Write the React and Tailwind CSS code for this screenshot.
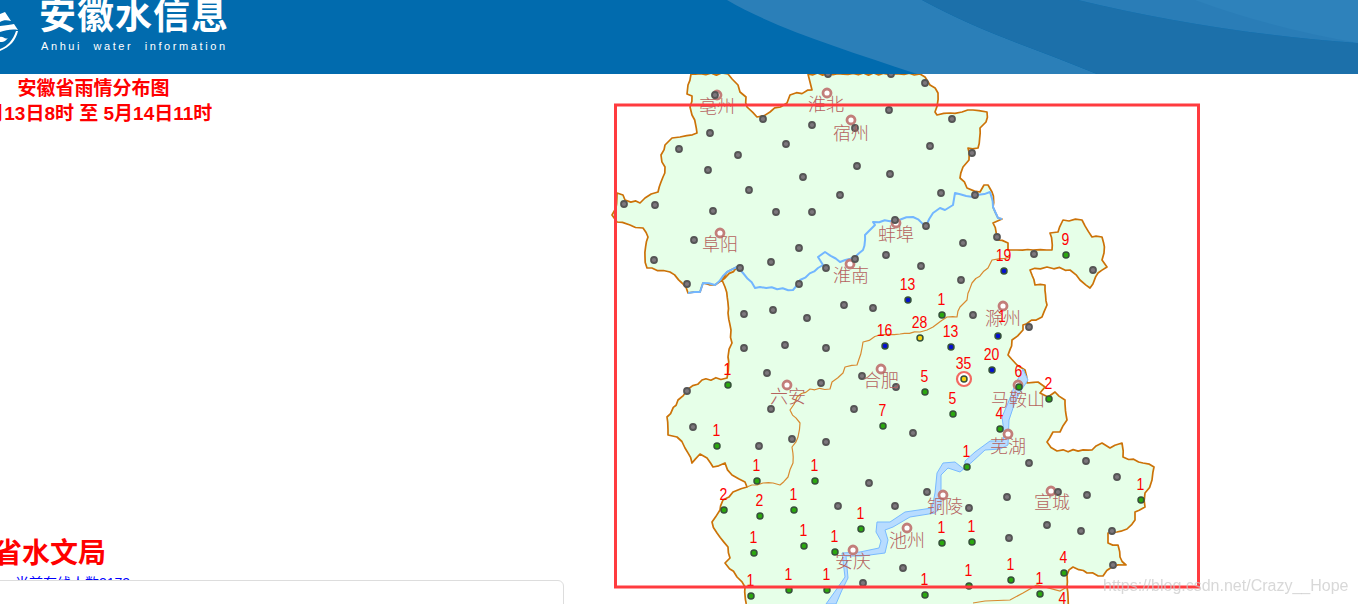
import React from "react";

const cjk = "font-['Liberation_Sans','Noto_Sans_CJK_SC',sans-serif]";

const outline =
  "808,74 920,74 925,77 930,85 938,93 935,112 937,115 950,113 962,112 973,110 987,112 986,122 980,128 978,148 968,148 969,160 963,167 960,178 967,188 980,192 984,185 988,185 992,192 993,207 998,218 1002,219 993,223 997,240 1008,243 1008,250 1017,250 1033,250 1052,250 1050,233 1058,232 1063,220 1082,220 1092,237 1102,237 1104,253 1102,260 1107,267 1098,273 1090,288 1080,280 1070,270 1047,267 1030,270 1035,285 1045,285 1047,305 1042,317 1023,325 1023,330 1012,340 1008,355 1017,365 1025,370 1027,383 1038,382 1045,387 1040,393 1048,397 1055,392 1065,400 1067,420 1060,432 1053,432 1047,442 1057,451 1092,450 1102,443 1110,448 1122,443 1123,457 1143,463 1154,467 1152,480 1145,493 1145,507 1135,512 1135,520 1127,529 1117,532 1108,533 1108,543 1118,545 1120,557 1126,565 1112,567 1103,576 1087,573 1073,567 1067,575 1067,587 1068,610 748,610 745,587 737,577 725,563 730,558 728,547 717,533 712,522 720,510 723,500 733,492 747,487 745,482 732,475 725,463 713,467 707,458 700,454 692,463 685,448 677,437 668,435 667,417 678,400 687,390 702,380 727,378 728,357 732,343 731,330 728,313 725,287 722,280 727,272 737,267 715,285 703,283 700,292 688,293 682,283 670,272 647,268 645,257 648,237 643,228 630,225 617,222 612,215 616,208 617,193 623,195 625,200 640,203 645,198 658,192 663,177 665,167 661,155 665,145 672,138 680,137 697,133 692,115 690,107 692,96 687,94 688,85 691,74 728,74 738,85 740,92 746,97 747,107 757,117 770,112 787,103 790,95 812,90";

const innerLine =
  "1010,257 992,260 988,268 972,283 967,300 960,307 957,317 947,317 933,327 920,332 900,334 880,335 863,342 857,365 845,367 843,373 832,382 830,389 810,389 797,397 790,410 800,423 798,437 792,447 793,463 788,477 780,485 773,483 763,483 747,487";

const huaiRiver =
  "688,293 700,292 703,283 715,285 727,272 737,267 743,273 755,288 760,287 793,290 800,280 818,268 823,265 818,257 825,252 840,262 855,257 863,250 865,235 875,225 873,222 895,220 913,217 926,226 933,213 940,208 945,210 953,205 955,193 973,197 990,192 993,207 998,218 1002,219";

const yangtze =
  "1023,369 1015,385 1008,403 1002,417 1004,432 1003,441 990,441 975,452 965,461 965,470 955,462 943,463 937,473 935,493 932,508 905,512 890,522 877,522 876,532 881,541 879,548 860,552 842,553 845,577 836,590 826,604 836,604 842,590 848,578 846,556 862,556 885,553 888,540 885,530 893,527 910,517 935,513 941,505 941,475 948,468 960,472 972,462 985,450 1000,449 1008,445 1009,420 1014,405 1020,392 1028,380";

// break long straight runs up so the borders look hand digitised like the source map
function roughen(points, amount) {
  const pts = points.split(" ").map((p) => p.split(",").map(Number));
  const out = [];
  pts.forEach(([x, y], i) => {
    out.push([x, y]);
    const next = pts[i + 1];
    if (!next) return;
    const len = Math.hypot(next[0] - x, next[1] - y);
    const steps = Math.floor(len / 5);
    for (let s = 1; s < steps; s++) {
      const t = s / steps;
      const w = Math.sin(x * 12.9 + y * 78.2 + s * 37.7) * amount;
      const h = Math.cos(x * 39.3 + y * 11.1 + s * 53.1) * amount;
      out.push([x + (next[0] - x) * t + w, y + (next[1] - y) * t + h]);
    }
  });
  return out.map(([x, y]) => `${x.toFixed(1)},${y.toFixed(1)}`).join(" ");
}

const grayDots = [
  [715, 95], [763, 119], [812, 125], [855, 128], [889, 110], [925, 83], [828, 74], [891, 74], [952, 119],
  [710, 133], [679, 149], [738, 155], [786, 144], [930, 146], [972, 153], [708, 170], [803, 177], [857, 166],
  [890, 174], [749, 190], [840, 195], [941, 193], [975, 195], [624, 204], [655, 205], [713, 211], [776, 212],
  [812, 212], [895, 220], [926, 226], [694, 240], [963, 243], [997, 237], [799, 248], [654, 260], [771, 262],
  [886, 255], [855, 259], [921, 266], [740, 268], [826, 268], [961, 280], [687, 284], [799, 284], [744, 314],
  [773, 310], [807, 318], [844, 305], [873, 308], [973, 315], [1034, 254], [1093, 270], [1029, 327], [744, 348],
  [785, 345], [826, 348], [767, 373], [821, 383], [862, 376], [896, 387], [687, 391], [771, 409], [854, 409],
  [693, 427], [792, 439], [759, 446], [913, 433], [826, 442], [869, 483], [927, 492], [838, 506], [895, 506],
  [903, 568], [863, 583], [1029, 463], [1086, 461], [1117, 477], [1058, 492], [1087, 495], [1007, 497], [969, 508],
  [1047, 525], [1081, 531], [1112, 531], [1009, 538], [1113, 565],
];

// x, y, rainfall, colour class, label x / y when it isn't right above the dot
const rainDots = [
  [1066, 255, "9", "g"], [942, 315, "1", "g"], [1019, 387, "6", "g"], [1049, 399, "2", "g"], [925, 392, "5", "g"],
  [953, 414, "5", "g"], [883, 426, "7", "g"], [1000, 429, "4", "g"], [967, 467, "1", "g"], [728, 385, "1", "g"],
  [717, 446, "1", "g"], [757, 481, "1", "g"], [815, 481, "1", "g"], [724, 510, "2", "g"], [760, 516, "2", "g"],
  [794, 510, "1", "g"], [861, 529, "1", "g"], [754, 553, "1", "g"], [804, 546, "1", "g"], [835, 552, "1", "g"],
  [942, 543, "1", "g"], [972, 542, "1", "g"], [1141, 500, "1", "g"], [1064, 573, "4", "g"], [1011, 580, "1", "g"],
  [969, 586, "1", "g"], [751, 596, "1", "g"], [789, 590, "1", "g"], [827, 590, "1", "g"], [925, 595, "1", "g"],
  [1040, 594, "1", "g"], [1063, 614, "4", "g"],
  [1004, 271, "19", "b"], [908, 300, "13", "b"], [885, 346, "16", "b"], [951, 347, "13", "b"],
  [998, 336, "1", "b", 1002, 322], [992, 370, "20", "b"],
  [920, 338, "28", "y"], [964, 379, "35", "y"],
];

const dotFill = { g: "#2aa80e", b: "#0510d0", y: "#f5d210" };

const cities = [
  ["亳州", 717, 95, 717, 107], ["淮北", 827, 93, 826, 105], ["宿州", 851, 120, 851, 134], ["阜阳", 720, 233, 720, 245],
  ["蚌埠", 896, 223, 896, 235], ["淮南", 850, 264, 851, 276], ["滁州", 1003, 306, 1003, 319], ["合肥", 881, 369, 881, 381],
  ["六安", 787, 385, 788, 397], ["马鞍山", 1018, 385, 1018, 400], ["芜湖", 1008, 434, 1008, 447], ["铜陵", 943, 495, 945, 507],
  ["宣城", 1051, 491, 1052, 503], ["池州", 907, 528, 907, 541], ["安庆", 853, 550, 853, 562],
];

function ProvinceMap() {
  return (
    <svg viewBox="600 74 758 530" className="w-[758px] h-[530px] shrink-0">
      <polygon points={roughen(outline, 1.1)} fill="#e6ffe8" stroke="#cc7208" strokeWidth="1.7" strokeLinejoin="round" />
      <polygon points={yangtze} fill="#b8dcff" stroke="#78baff" strokeWidth="1" />
      <polyline points={roughen(huaiRiver, 0.8)} fill="none" stroke="#72b6ff" strokeWidth="2" strokeLinejoin="round" />
      <polyline points={roughen(innerLine, 0.8)} fill="none" stroke="#d88a30" strokeWidth="1.2" strokeLinejoin="round" />
      <polyline points="1067,587 1060,591 1037,585 1023,593 1010,600 985,601 973,603" fill="none" stroke="#d88a30" strokeWidth="1.2" />

      {cities.map(([name, rx, ry]) => (
        <circle key={name} cx={rx} cy={ry} r="4" fill="#fff" stroke="#c27e7a" strokeWidth="2.8" />
      ))}

      {grayDots.map(([x, y]) => (
        <circle key={`${x}-${y}`} cx={x} cy={y} r="3" fill="#7d777d" stroke="#555" strokeWidth="1.8" />
      ))}

      <circle cx="964" cy="379" r="7" fill="#fff" stroke="#f26a62" strokeWidth="2.2" />
      {rainDots.map(([x, y, , kind]) => (
        <circle key={`${x}-${y}`} cx={x} cy={y} r="3" fill={dotFill[kind]} stroke="#35513a" strokeWidth="1.5" />
      ))}

      {cities.map(([name, , , tx, ty]) => (
        <text key={name} x={tx} y={ty + 6} textAnchor="middle" fontSize="18" fill="#b5635f" fontFamily="'Noto Sans CJK SC', sans-serif" fontWeight="300">
          {name}
        </text>
      ))}
      {rainDots.map(([x, y, value, , lx, ly]) => (
        <text
          key={`${x}-${y}-t`}
          x={lx ?? x - 0.5}
          y={ly ?? y - 10}
          textAnchor="middle"
          fontSize="16"
          textLength={value.length * 7.8}
          lengthAdjust="spacingAndGlyphs"
          fill="#f00"
          fontFamily="'Liberation Sans', sans-serif"
        >
          {value}
        </text>
      ))}

      <rect x="615.5" y="105" width="583" height="482" fill="none" stroke="#ff3b3f" strokeWidth="3" />
    </svg>
  );
}

function HeaderArt() {
  return (
    <svg viewBox="0 0 1358 74" className="absolute inset-0 w-full h-full" preserveAspectRatio="none">
      <path d="M727 0 C775 28 840 48 917 74 L1097 74 C1040 50 980 32 922 0 Z" fill="#2b7fb8" />
      <path d="M922 0 C980 32 1040 50 1097 74 L1358 74 L1358 43 C1250 35 1160 20 1078 0 Z" fill="#1c70aa" />
      <path d="M1078 0 C1160 20 1250 35 1358 43 L1358 0 Z" fill="#2a7db7" />
      <path d="M1195 0 C1250 20 1300 33 1358 43 L1358 0 Z" fill="#2e82bb" />
    </svg>
  );
}

function Logo() {
  return (
    <svg viewBox="0 0 18 52" className="w-[18px] h-[52px] shrink-0">
      <path d="M0 14 L5 12 L11 21 C7 20 3 20 0 22 Z" fill="#fff" />
      <path d="M0 26 C6 25 11 25 14 24 L18 30 C12 29 6 30 0 32 Z" fill="#fff" />
      <path d="M18 31 C16 40 10 47 0 51 L0 49 C8 46 13 40 16 31 Z" fill="#fff" />
      <path d="M0 37 C3 36 5 40 8 38 C5 42 3 42 0 42 Z" fill="#fff" />
    </svg>
  );
}

export default function App() {
  return (
    <div className={`h-[604px] w-[1358px] overflow-hidden bg-white ${cjk}`}>
      <header className="relative h-[74px] bg-[#016bae] overflow-hidden flex items-start">
        <HeaderArt />
        <div className="relative flex items-start">
          <Logo />
          <div className="ml-[21px] -mt-[3px] text-white">
            <div className="text-[37px] leading-[40px] font-bold tracking-[1px] whitespace-nowrap">安徽水信息</div>
            <div className="mt-[2px] ml-[2px] text-[11px] leading-[14px] tracking-[2.6px] whitespace-nowrap font-['Liberation_Sans',sans-serif]">
              Anhui&nbsp; water&nbsp; information
            </div>
          </div>
        </div>
      </header>

      <main className="flex h-[530px]">
        <section className="w-[600px] shrink-0 flex flex-col">
          <div className="w-[187px] pt-[2px] text-[19px] leading-[25px] font-bold text-[#f00]">
            <div className="flex justify-center whitespace-nowrap">安徽省雨情分布图</div>
            <div className="flex justify-center whitespace-nowrap">5月13日8时 至 5月14日11时</div>
          </div>
          <div className="mt-auto w-[106px] flex justify-end whitespace-nowrap text-[28px] leading-[36px] font-bold text-[#f00]">
            安徽省水文局
          </div>
          <div className="h-[7px] mt-[1px] overflow-hidden pl-[15px] text-[14px] leading-[20px] text-[#00f] whitespace-nowrap">
            当前在线人数3173
          </div>
          <div className="-ml-2 w-[572px] h-[32px] -mb-2 bg-white border border-[#ddd] rounded-md"></div>
        </section>
        <ProvinceMap />
      </main>

      <div className="fixed left-[1103px] top-[576px] text-[16px] leading-[20px] text-[#c8c8c8]/70 font-['Liberation_Sans',sans-serif] whitespace-nowrap">
        https://blog.csdn.net/Crazy__Hope
      </div>
    </div>
  );
}
